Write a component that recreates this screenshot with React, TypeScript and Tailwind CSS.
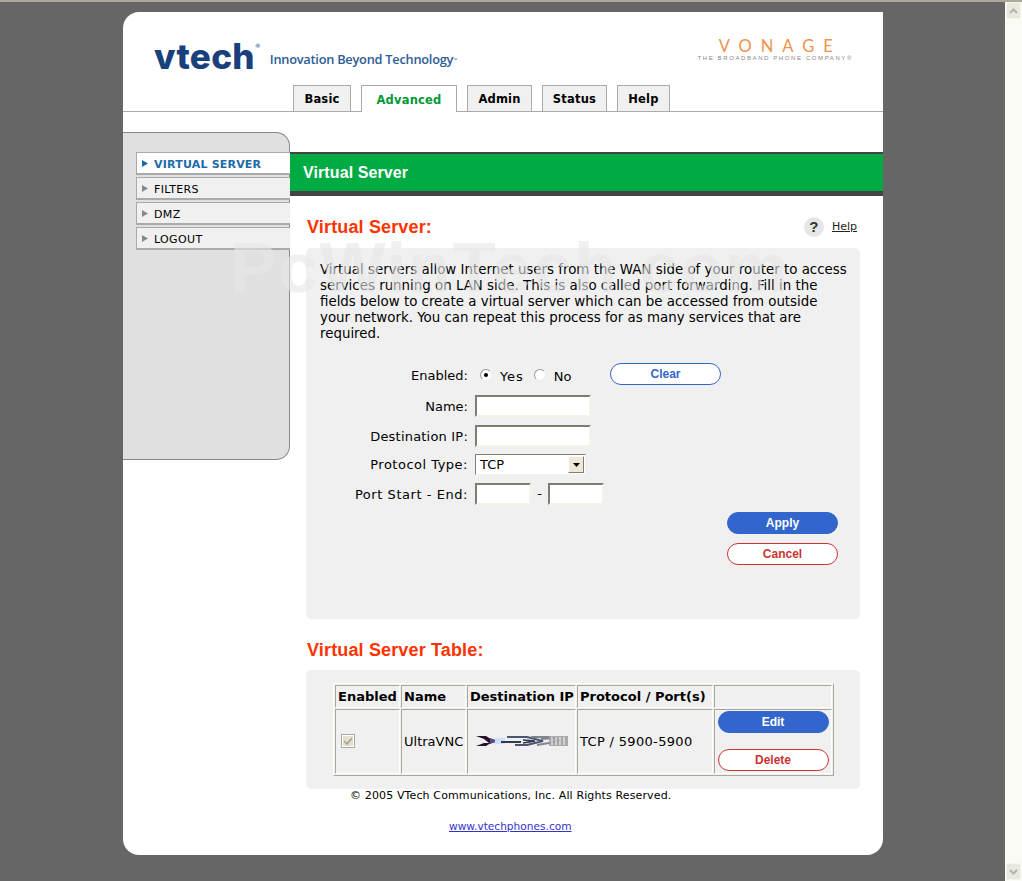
import React from "react";

const verdana = "font-['DejaVu_Sans',Verdana,sans-serif]";
const arial = "font-['Liberation_Sans',Arial,sans-serif]";

function Pill({ label, kind }: { label: string; kind: "blue" | "red" | "clear" }) {
  const cls =
    kind === "blue"
      ? "bg-[#3366cc] text-white border-[#3366cc]"
      : kind === "red"
      ? "bg-white text-[#cc3333] border-[#cc3333]"
      : "bg-white text-[#3366cc] border-[#3366cc]";
  return (
    <div className={`w-[111px] h-[22px] rounded-[11px] border flex items-center justify-center text-[12px] font-bold ${arial} ${cls}`}>
      {label}
    </div>
  );
}

function Field({ className }: { className: string }) {
  return (
    <input
      readOnly
      className={`h-[22px] bg-white border-2 border-t-[#7f7d72] border-l-[#7f7d72] border-r-[#f5f3e8] border-b-[#f5f3e8] outline-none ${className}`}
    />
  );
}

function Tab({ label, active, w }: { label: string; active?: boolean; w: string }) {
  return (
    <div
      className={`${w} flex items-center justify-center border border-[#aaaaaa] border-b-0 pt-[3px] text-[11.5px] font-bold tracking-[0.2px] ${
        active ? "h-[27px] bg-white text-[#009933] -mb-px" : "h-[26px] bg-[#f0f0f0] text-black"
      }`}
    >
      {label}
    </div>
  );
}

function SideItem({ label, active }: { label: string; active?: boolean }) {
  return (
    <div
      className={`h-[23px] flex items-center border-l border-t border-b-2 border-[#aaaaaa] pl-[5px] pt-[3px] -mr-px ${
        active ? "bg-white text-[#1a6aa8] font-bold tracking-[0.2px]" : "bg-[#f0f0f0] text-black tracking-[0.35px]"
      }`}
    >
      <svg width="6" height="7" viewBox="0 0 6 7" className="mr-[6px] shrink-0 -mt-[2px]">
        <path d="M0 0 L6 3.5 L0 7 Z" fill={active ? "#1a6aa8" : "#888888"} />
      </svg>
      <span className="text-[11px] leading-none">{label}</span>
    </div>
  );
}

function Row({ label, labelClass, className, children }: { label: string; labelClass?: string; className?: string; children: React.ReactNode }) {
  return (
    <div className={`flex items-center ${className ?? ""}`}>
      <div className={`w-[155px] pr-[7px] text-right text-[13px] leading-none shrink-0 whitespace-nowrap ${labelClass ?? ""}`}>{label}</div>
      <div className="flex items-center">{children}</div>
    </div>
  );
}

function Radio({ on }: { on?: boolean }) {
  return (
    <span className="w-[12px] h-[12px] rounded-full bg-white border border-t-[#9a9a90] border-l-[#9a9a90] border-r-[#eeeeee] border-b-[#eeeeee] flex items-center justify-center shrink-0">
      {on && <span className="w-[4px] h-[4px] rounded-full bg-black" />}
    </span>
  );
}

const headCell = "border border-t-[#aca899] border-l-[#aca899] border-r-white border-b-white px-[2px] pt-[1px] h-[22px] text-left font-bold text-[13px] whitespace-nowrap";
const bodyCell = "border border-t-[#aca899] border-l-[#aca899] border-r-white border-b-white px-[2px] font-normal text-[13px] whitespace-nowrap";

export default function App() {
  return (
    <div className={`w-[1022px] h-[881px] overflow-hidden flex flex-col bg-[#666666] text-black ${verdana}`}>
      <div className="h-[2px] bg-[#aca899] shrink-0" />
      <div className="flex flex-1 min-h-0">
        <div className="flex-1 pl-[123px] pt-[10px]">
          <div className="relative w-[760px] h-[843px] bg-white rounded-tl-[16px] rounded-bl-[16px] rounded-br-[16px] overflow-hidden flex flex-col">
            {/* Header */}
            <div className="h-[73px] shrink-0 flex items-start justify-between pl-[31px] pr-[30px]">
              <div className="flex items-end pt-[24px]">
                <span className="text-[35px] leading-[40px] font-extrabold tracking-[0.3px] text-[#17407c] font-['Inter',sans-serif]">vtech</span>
                <span className="text-[6px] text-[#17407c] mb-[26px]">®</span>
                <span className="ml-[9px] mb-[9px] text-[12.8px] leading-[16px] font-semibold tracking-[-0.25px] text-[#2c5d94] font-['Open_Sans',sans-serif] whitespace-nowrap">
                  Innovation Beyond Technology<sup className="text-[5px]">™</sup>
                </span>
              </div>
              <div className="flex flex-col items-center pt-[25px]">
                <span className="text-[16.5px] leading-[18px] font-normal tracking-[9px] text-[#f0924a] font-['Lato',sans-serif] -mr-[10px]">VONAGE</span>
                <span className={`text-[6px] leading-[7px] tracking-[1.6px] text-[#888888] whitespace-nowrap ${arial}`}>THE BROADBAND PHONE COMPANY®</span>
              </div>
            </div>
            {/* Tabs */}
            <div className="h-[27px] shrink-0 flex items-end gap-[10px] pl-[170px] border-b border-[#aaaaaa]">
              <Tab label="Basic" w="w-[58px]" />
              <Tab label="Advanced" active w="w-[96px]" />
              <Tab label="Admin" w="w-[65px]" />
              <Tab label="Status" w="w-[65px]" />
              <Tab label="Help" w="w-[53px]" />
            </div>
            {/* Body */}
            <div className="flex flex-1 min-h-0">
              <div className="w-[167px] shrink-0 pt-[20px]">
                <div className="h-[328px] bg-[#e0e0e0] border border-l-0 border-[#888888] rounded-tr-[14px] rounded-br-[14px] pl-[13px] pt-[19px] flex flex-col gap-[2px]">
                  <SideItem label="VIRTUAL SERVER" active />
                  <SideItem label="FILTERS" />
                  <SideItem label="DMZ" />
                  <SideItem label="LOGOUT" />
                </div>
              </div>
              <div className="flex-1 min-w-0 pt-[40px]">
                <div className={`h-[44px] bg-[#00ab44] border-t-2 border-b-[5px] border-[#444444] flex items-center pl-[13px] text-white text-[16px] font-bold tracking-[0.1px] ${arial}`}>
                  Virtual Server
                </div>
                <div className="pl-[16px] pr-[23px]">
                  <div className="h-[52px] flex items-center justify-between pt-[10px] pr-[3px]">
                    <h1 className={`pl-[1px] text-[18px] font-bold tracking-[0.15px] text-[#ff3300] ${arial}`}>Virtual Server:</h1>
                    <div className="flex items-center gap-[8px]">
                      <span className={`w-[20px] h-[20px] rounded-full bg-[#e6e6e6] flex items-center justify-center text-[15px] font-bold text-[#333333] ${arial}`}>?</span>
                      <span className="text-[11px] underline text-[#222222]">Help</span>
                    </div>
                  </div>
                  <div className="h-[371px] bg-[#f0f0f0] rounded-[5px] px-[14px] pt-[14px]">
                    <p className="text-[13.38px] leading-[16px] w-[528px]">
                      Virtual servers allow Internet users from the WAN side of your router to access services running on LAN side. This is also called port forwarding. Fill in the fields below to create a virtual server which can be accessed from outside your network. You can repeat this process for as many services that are required.
                    </p>
                    <div className="flex mt-[20px]">
                      <div className="flex flex-col pt-[6px] w-[290px]">
                        <div className="flex items-center h-[14px]">
                          <div className="w-[154px] pr-[6px] text-right text-[13px] leading-none shrink-0">Enabled:</div>
                          <span className="ml-[6px]"><Radio on /></span>
                          <span className="ml-[8px] text-[13px] leading-none mt-[2px] tracking-[0.9px]">Yes</span>
                          <span className="ml-[10px]"><Radio /></span>
                          <span className="ml-[8px] text-[13px] leading-none mt-[2px]">No</span>
                        </div>
                        <Row label="Name:" className="mt-[13px]"><Field className="w-[116px]" /></Row>
                        <Row label="Destination IP:" labelClass="tracking-[0.2px]" className="mt-[8px]"><Field className="w-[116px]" /></Row>
                        <Row label="Protocol Type:" labelClass="tracking-[0.5px]" className="mt-[7px]">
                          <div className="w-[111px] h-[21px] bg-white border border-t-[#7f7d72] border-l-[#7f7d72] border-r-[#f5f3e8] border-b-[#f5f3e8] flex items-center justify-between pl-[4px] pr-[1px] text-[13px]">
                            <span>TCP</span>
                            <span className="w-[16px] h-[17px] bg-[#ece9d8] border border-t-white border-l-white border-r-[#7f7d72] border-b-[#7f7d72] flex items-center justify-center">
                              <svg width="7" height="4" viewBox="0 0 7 4"><path d="M0 0 H7 L3.5 4 Z" fill="#000000" /></svg>
                            </span>
                          </div>
                        </Row>
                        <Row label="Port Start - End:" labelClass="tracking-[0.55px]" className="mt-[8px]">
                          <Field className="w-[56px]" />
                          <span className="w-[17px] text-center text-[13px]">-</span>
                          <Field className="w-[56px]" />
                        </Row>
                      </div>
                      <div className="pt-[1px]">
                        <Pill label="Clear" kind="clear" />
                      </div>
                    </div>
                    <div className="flex flex-col items-end gap-[9px] mt-[7px] pr-[8px]">
                      <Pill label="Apply" kind="blue" />
                      <Pill label="Cancel" kind="red" />
                    </div>
                  </div>
                  <h2 className={`h-[51px] pl-[1px] pt-[20px] text-[18px] leading-[22px] font-bold tracking-[0.15px] text-[#ff3300] ${arial}`}>Virtual Server Table:</h2>
                  <div className="h-[119px] bg-[#f0f0f0] rounded-[5px] pl-[27px] pt-[13px]">
                    <table className="w-[501px] border border-t-white border-l-white border-r-[#aca899] border-b-[#aca899] border-separate border-spacing-[1px] table-fixed">
                      <colgroup>
                        <col className="w-[65px]" />
                        <col className="w-[65px]" />
                        <col className="w-[109px]" />
                        <col className="w-[136px]" />
                        <col className="w-[118px]" />
                      </colgroup>
                      <thead>
                        <tr>
                          <th className={headCell}>Enabled</th>
                          <th className={headCell}>Name</th>
                          <th className={headCell}>Destination IP</th>
                          <th className={headCell}>Protocol / Port(s)</th>
                          <th className={headCell}></th>
                        </tr>
                      </thead>
                      <tbody>
                        <tr>
                          <td className={bodyCell + " h-[65px]"}>
                            <span className="ml-[4px] w-[12px] h-[12px] bg-[#e3e0d0] border border-white flex items-center justify-center outline outline-1 outline-[#aca899]">
                              <svg width="10" height="9" viewBox="0 0 10 9"><path d="M1 4 L4 7 L9 1" fill="none" stroke="#a5a294" strokeWidth="1.6" /></svg>
                            </span>
                          </td>
                          <td className={bodyCell + " text-[12.8px] pt-[2px]"}>UltraVNC</td>
                          <td className={bodyCell}>
                            <svg width="94" height="12" viewBox="0 0 94 12" className="ml-[5px] blur-[0.6px]">
                              <path d="M1 1 H11 L19 6 L11 11 H1 L9 8 H14 L9 4 Z" fill="#2a1030" />
                              <path d="M15 3 L24 6 L15 9 Z" fill="#5a4a88" />
                              <path d="M20 3 H30 V9 H20 Z" fill="#cfe0f5" />
                              <path d="M26 7 H46" stroke="#2f3a55" strokeWidth="2" fill="none" />
                              <path d="M32 2 H52 L68 6 L52 10 H40" stroke="#4a5570" strokeWidth="2" fill="none" />
                              <path d="M48 5 L60 6 L48 8" stroke="#30384f" strokeWidth="1.4" fill="none" />
                              <path d="M56 2 H74 M62 10 L74 8 L86 5 M66 4 L80 3" stroke="#7f848e" strokeWidth="1.8" fill="none" />
                              <rect x="74" y="1" width="19" height="10" fill="#9c9c9c" opacity="0.85" />
                              <path d="M77 2 V10 M81 2 V10 M85 2 V10 M89 2 V10" stroke="#e8e8e8" strokeWidth="1.2" />
                            </svg>
                          </td>
                          <td className={bodyCell + " text-[12.4px] pt-[2px] tracking-[0.33px]"}>TCP / 5900-5900</td>
                          <td className={bodyCell}>
                            <div className="flex flex-col gap-[16px] items-center">
                              <Pill label="Edit" kind="blue" />
                              <Pill label="Delete" kind="red" />
                            </div>
                          </td>
                        </tr>
                      </tbody>
                    </table>
                  </div>
                  <p className="pl-[44px] text-[11px] leading-[13px] tracking-[0.13px]">© 2005 VTech Communications, Inc. All Rights Reserved.</p>
                  <p className="pl-[143px] pt-[18px] text-[10.6px] leading-[13px] underline text-[#3333cc]">www.vtechphones.com</p>
                </div>
              </div>
            </div>
            {/* Watermark */}
            <div className={`absolute left-[107px] top-[216px] text-[70px] leading-[80px] font-bold tracking-[1.9px] text-[#e6e6e6]/60 whitespace-nowrap pointer-events-none ${arial}`}>
              PcWinTech.com
            </div>
          </div>
        </div>
        {/* Scrollbar */}
        <div className="w-[17px] shrink-0 bg-[#fbfbf5] flex flex-col justify-between pb-[1px]">
          <div className="h-[17px] mx-[1px] bg-[#e9e8dc] border border-[#f5f5ee] rounded-[2px] flex items-center justify-center">
            <svg width="9" height="6" viewBox="0 0 9 6"><path d="M1 5 L4.5 1.5 L8 5" fill="none" stroke="#b5b4a8" strokeWidth="2" /></svg>
          </div>
          <div className="h-[17px] mx-[1px] bg-[#e9e8dc] border border-[#f5f5ee] rounded-[2px] flex items-center justify-center">
            <svg width="9" height="6" viewBox="0 0 9 6"><path d="M1 1 L4.5 4.5 L8 1" fill="none" stroke="#b5b4a8" strokeWidth="2" /></svg>
          </div>
        </div>
      </div>
    </div>
  );
}
